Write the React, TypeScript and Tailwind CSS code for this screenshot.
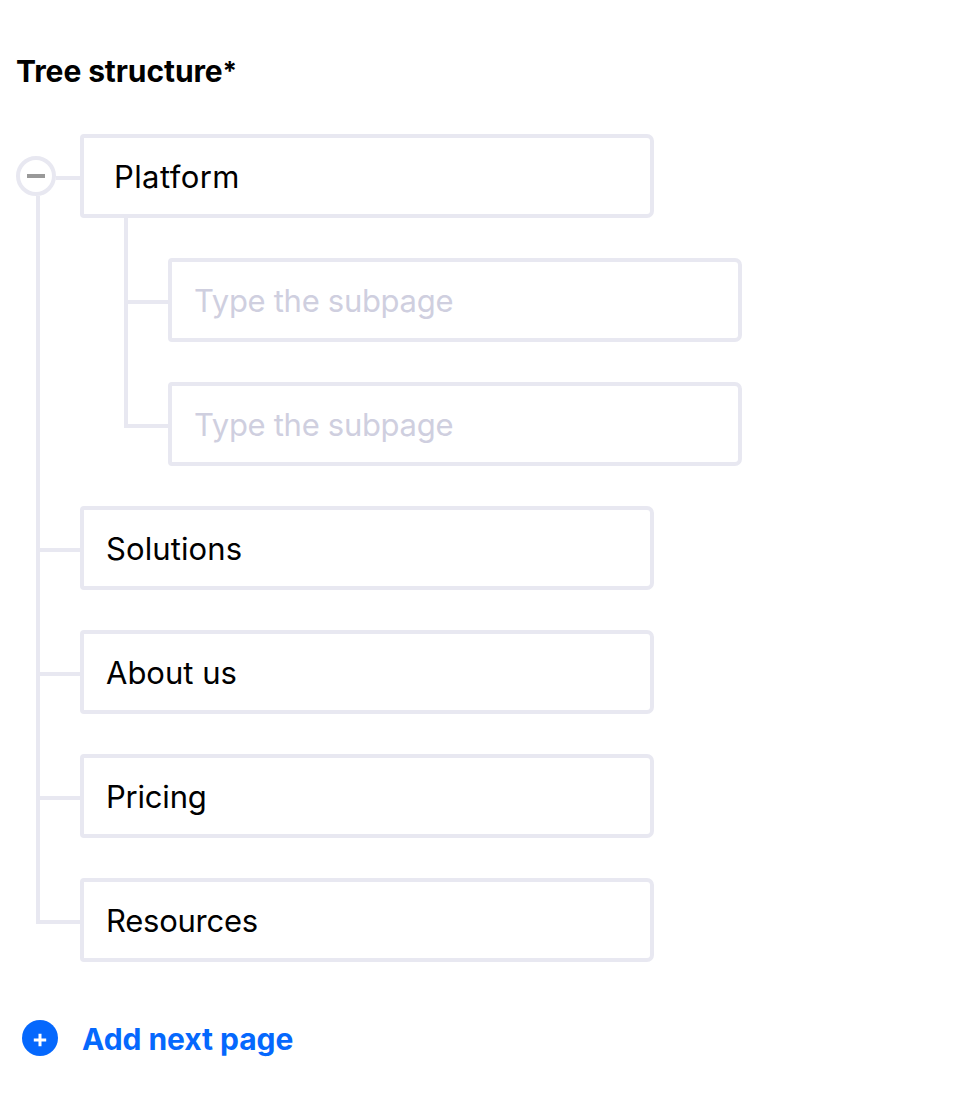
import { useState } from "react";

type Page = {
  id: string;
  name: string;
  tracking: string;
};

const PAGES: Page[] = [
  { id: "solutions", name: "Solutions", tracking: "tracking-[0.1px]" },
  { id: "about", name: "About us", tracking: "tracking-normal" },
  { id: "pricing", name: "Pricing", tracking: "tracking-[-0.2px]" },
  { id: "resources", name: "Resources", tracking: "tracking-[-0.25px]" },
];

const SUBPAGES = ["subpage-1", "subpage-2"];

type FieldProps = {
  label: string;
  value?: string;
  placeholder?: string;
  className?: string;
};

function PageField({ label, value = "", placeholder, className = "" }: FieldProps) {
  const [text, setText] = useState(value);

  return (
    <input
      type="text"
      aria-label={label}
      value={text}
      placeholder={placeholder}
      onChange={(e) => setText(e.target.value)}
      className={`block h-[84px] w-[574px] shrink-0 rounded-l-[4px] rounded-r-[7px] border-4 border-[#e8e8f1] bg-white pt-px text-[31px] text-black outline-none placeholder:text-[#cfcfdf] ${className}`}
    />
  );
}

// Connector from the trunk to one field, the trunk stops at the last one
function Branch({ isLast = false, className }: { isLast?: boolean; className: string }) {
  return (
    <div className="flex w-11 shrink-0 flex-col">
      <div className={`border-b-4 border-l-4 border-[#e8e8f1] ${className}`} />
      {!isLast && <div className="w-1 flex-1 bg-[#e8e8f1]" />}
    </div>
  );
}

export default function App() {
  return (
    <main className="min-h-[1093px] bg-white pl-4 pt-[50px] font-['Inter','Liberation_Sans',sans-serif]">
      <h1 className="h-[84px] text-[30px] font-bold leading-[42px] tracking-[-0.1px] text-black">
        Tree structure<span className="align-[2px] text-[26px] leading-none">*</span>
      </h1>

      {/* Expanded page with its subpages */}
      <section className="flex">
        <div className="flex w-16 shrink-0">
          <div className="flex w-10 flex-col pt-[22px]">
            <button
              type="button"
              aria-label="Collapse"
              className="flex size-10 shrink-0 items-center justify-center rounded-full border-4 border-[#e8e8f1] bg-white"
            >
              <span className="h-1 w-[18px] bg-[#999]" />
            </button>
            <div className="ml-5 w-1 flex-1 bg-[#e8e8f1]" />
          </div>
          <div className="mt-[42px] h-1 flex-1 bg-[#e8e8f1]" />
        </div>
        <div className="pb-10">
          <PageField label="Page name" value="Platform" className="pl-[30px] tracking-[0.4px]" />
          <div className="pl-11">
            {SUBPAGES.map((id, i) => (
              <div key={id} className="flex">
                <Branch isLast={i === SUBPAGES.length - 1} className="h-[86px]" />
                <div className="pt-10">
                  <PageField
                    label="Subpage name"
                    placeholder="Type the subpage"
                    className="pl-[22px] tracking-[-0.3px]"
                  />
                </div>
              </div>
            ))}
          </div>
        </div>
      </section>

      {/* Collapsed pages */}
      {PAGES.map((page, i) => (
        <div key={page.id} className="flex pl-5">
          <Branch isLast={i === PAGES.length - 1} className="h-[46px]" />
          <div className="pb-10">
            <PageField label="Page name" value={page.name} className={`pl-[22px] ${page.tracking}`} />
          </div>
        </div>
      ))}

      <button type="button" className="mt-[18px] flex items-center pl-1.5 text-[#0568fd]">
        <span className="flex size-9 items-center justify-center rounded-full bg-[#0568fd]">
          <svg width="14" height="14" viewBox="0 0 14 14" className="mt-[3px]" aria-hidden="true">
            <path d="M7 .8v12.4M.8 7h12.4" stroke="white" strokeWidth="3" />
          </svg>
        </span>
        <span className="pl-6 pt-0.5 text-[30px] font-bold leading-[34px] tracking-[-0.05px]">
          Add next page
        </span>
      </button>
    </main>
  );
}
